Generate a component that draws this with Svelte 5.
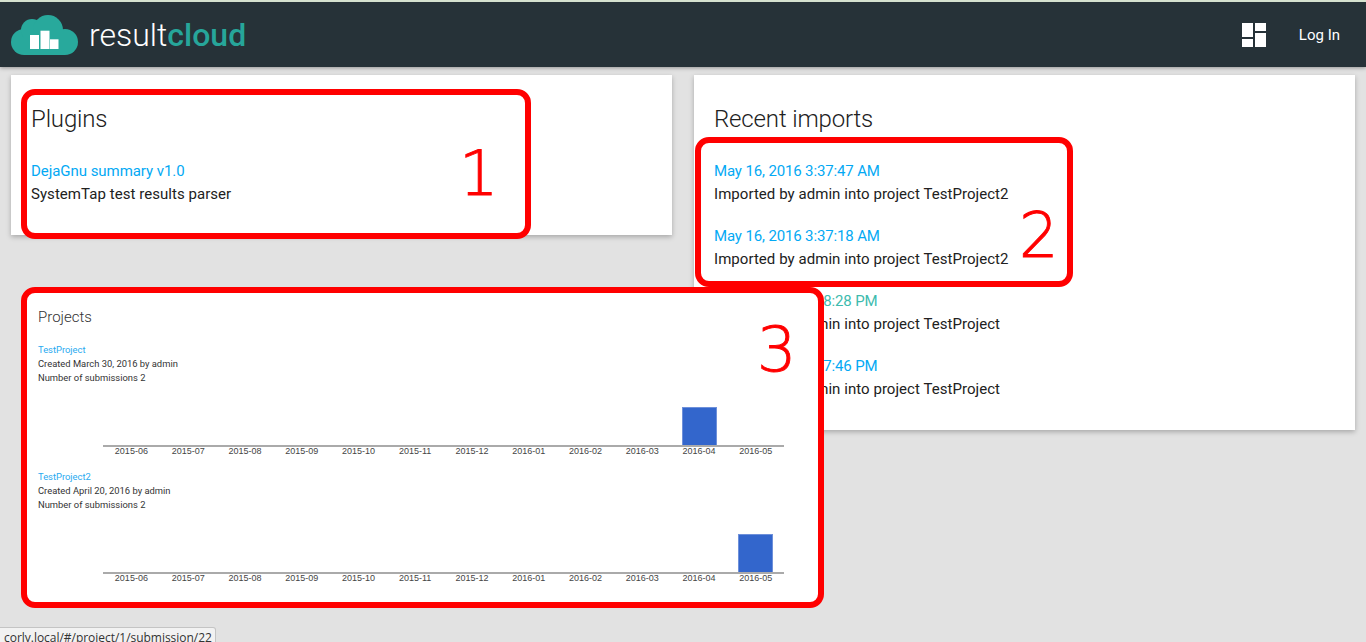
<script lang="ts">
  const imports = [
    { date: 'May 16, 2016 3:37:47 AM', text: 'Imported by admin into project TestProject2' },
    { date: 'May 16, 2016 3:37:18 AM', text: 'Imported by admin into project TestProject2' },
    { date: 'Mar 30, 2016 7:38:28 PM', text: 'Imported by admin into project TestProject', hover: true },
    { date: 'Mar 30, 2016 7:37:46 PM', text: 'Imported by admin into project TestProject' },
  ];

  const months = [
    '2015-06', '2015-07', '2015-08', '2015-09', '2015-10', '2015-11',
    '2015-12', '2016-01', '2016-02', '2016-03', '2016-04', '2016-05',
  ];

  const projects = [
    { name: 'TestProject', created: 'Created March 30, 2016 by admin', count: 2, barIndex: 10 },
    { name: 'TestProject2', created: 'Created April 20, 2016 by admin', count: 2, barIndex: 11 },
  ];
</script>

<div class="page">
  <header class="topbar">
    <div class="brand">
      <svg class="logo" viewBox="0 0 67 40" width="67" height="40" aria-hidden="true">
        <g fill="#28a99c">
          <circle cx="13" cy="27" r="13" />
          <circle cx="21" cy="15" r="11" />
          <circle cx="37" cy="15" r="15" />
          <circle cx="54" cy="27" r="13" />
          <rect x="13" y="15" width="41" height="25" />
        </g>
        <rect x="19" y="20" width="9" height="14" fill="#fff" />
        <rect x="29.500" y="15.700" width="9" height="18.300" fill="#fff" />
        <rect x="39" y="24.300" width="8.500" height="9.700" fill="#fff" />
      </svg>
      <span class="wordmark">result<b>cloud</b></span>
    </div>
    <div class="actions">
      <svg class="dash" viewBox="0 0 24 24" width="24" height="24" aria-hidden="true">
        <path d="M0 0h11v14H0zM13 0h11v8H13zM0 16h11v8H0zM13 10h11v14H13z" fill="#fff" />
      </svg>
      <span class="login">Log In</span>
    </div>
  </header>

  <main class="columns">
    <section class="card plugins">
      <h2>Plugins</h2>
      <a class="link plugin-link" href="#plugin">DejaGnu summary v1.0</a>
      <p>SystemTap test results parser</p>
    </section>
    <section class="card recent">
      <h2>Recent imports</h2>
      {#each imports as item}
        <div class="entry">
          <a class="link" class:hover={item.hover} href="#import">{item.date}</a>
          <p>{item.text}</p>
        </div>
      {/each}
    </section>
  </main>

  <!-- red annotation boxes drawn over the page -->
  <div class="callout box1"><span class="num">1</span></div>
  <div class="callout box2"><span class="num">2</span></div>
  <div class="callout box3">
    <h3>Projects</h3>
    {#each projects as project}
      <div class="project">
        <a class="small-link" href="#project">{project.name}</a>
        <div class="meta">{project.created}</div>
        <div class="meta">Number of submissions {project.count}</div>
        <div class="chart">
          <div class="plot">
            {#each months as _, i}
              <div class="slot">
                {#if i === project.barIndex}<div class="bar"></div>{/if}
              </div>
            {/each}
          </div>
          <div class="labels">
            {#each months as month}
              <span>{month}</span>
            {/each}
          </div>
        </div>
      </div>
    {/each}
    <span class="num">3</span>
  </div>

  <div class="status">corly.local/#/project/1/submission/22</div>
</div>

<style>
  :global(body) {
    margin: 0;
    background: #e2e2e2;
    font-family: Roboto, "Liberation Sans", sans-serif;
  }

  .page {
    position: relative;
    height: 642px;
    overflow: hidden;
    background: #e2e2e2;
  }

  .topbar {
    height: 65px;
    border-top: 2px solid #d5e2cf;
    background: #263238;
    display: flex;
    align-items: center;
    justify-content: space-between;
    box-shadow: 0 1px 4px rgba(0, 0, 0, 0.35);
  }

  .brand {
    display: flex;
    align-items: center;
    margin-left: 11px;
    gap: 11px;
  }

  .logo {
    display: block;
  }

  .wordmark {
    font-size: 32px;
    font-weight: 300;
    color: #fff;
    line-height: 40px;
  }

  .wordmark b {
    font-weight: 500;
    color: #26a69a;
  }

  .actions {
    display: flex;
    align-items: center;
    gap: 33px;
    margin-right: 26px;
  }

  .dash {
    display: block;
  }

  .login {
    font-size: 15px;
    color: #fff;
  }

  .columns {
    display: grid;
    grid-template-columns: 661px 661px;
    column-gap: 22px;
    align-items: start;
    padding: 8px 11px 0;
  }

  .card {
    background: #fff;
    box-shadow: 0 2px 5px rgba(0, 0, 0, 0.26);
    padding: 0 20px;
  }

  .plugins {
    height: 160px;
  }

  .recent {
    height: 355px;
  }

  h2 {
    margin: 0 0 26px;
    padding-top: 28px;
    font-size: 24px;
    line-height: 32px;
    font-weight: 300;
    letter-spacing: -0.15px;
    color: #212121;
  }

  .link {
    display: block;
    font-size: 15px;
    line-height: 20px;
    letter-spacing: -0.14px;
    color: #03a9f4;
    text-decoration: none;
  }

  .plugin-link {
    letter-spacing: -0.05px;
  }

  .link.hover {
    color: #3dbbae;
  }

  p {
    margin: 3px 0 0;
    font-size: 15px;
    line-height: 20px;
    letter-spacing: 0.05px;
    color: #212121;
  }

  .entry {
    height: 65px;
  }

  .callout {
    position: absolute;
    box-sizing: border-box;
    border: 6px solid #f00;
    border-radius: 14px;
  }

  .box1 {
    left: 21px;
    top: 89px;
    width: 510px;
    height: 150px;
  }

  .box2 {
    left: 695px;
    top: 137px;
    width: 378px;
    height: 150px;
  }

  .box3 {
    left: 21px;
    top: 287px;
    width: 803px;
    height: 321px;
    background: #fff;
    padding: 15px 11px 0;
  }

  .num {
    position: absolute;
    font-family: "DejaVu Sans", sans-serif;
    font-size: 62px;
    font-weight: 200;
    -webkit-text-stroke: 0.9px #f00;
    line-height: 65px;
    color: #f00;
  }

  .box1 .num {
    left: 432px;
    top: 46px;
  }

  .box2 .num {
    left: 318px;
    top: 60px;
  }

  .box3 .num {
    left: 730px;
    top: 24px;
  }

  h3 {
    margin: 0 0 17px;
    font-size: 15px;
    line-height: 18px;
    font-weight: 300;
    color: #333;
  }

  .project {
    height: 127px;
  }

  .small-link {
    display: block;
    font-size: 9.400px;
    line-height: 14px;
    color: #29aaf0;
    text-decoration: none;
  }

  .meta {
    font-size: 9.400px;
    line-height: 14px;
    color: #333;
  }

  .chart {
    margin-left: 65px;
    width: 681.200px;
    margin-top: 22px;
  }

  .plot {
    height: 38px;
    display: grid;
    grid-template-columns: repeat(12, 1fr);
    border-bottom: 2px solid #aaa;
  }

  .slot {
    display: flex;
    justify-content: center;
    align-items: flex-end;
  }

  .bar {
    width: 35px;
    height: 38px;
    box-sizing: border-box;
    background: #3366cc;
    border: 1px solid #6e90da;
    border-bottom: 0;
  }

  .labels {
    display: grid;
    grid-template-columns: repeat(12, 1fr);
    margin-top: -2px;
    font-family: "Liberation Sans", sans-serif;
    font-size: 9px;
    line-height: 13px;
    color: #444;
    text-align: center;
  }

  .status {
    position: absolute;
    left: 0;
    top: 627px;
    padding: 2px 3px 0 4px;
    box-sizing: border-box;
    height: 20px;
    font-family: "Open Sans", "Noto Sans", sans-serif;
    font-size: 12px;
    line-height: 16px;
    letter-spacing: -0.03px;
    color: #333;
    background: #f2f2f2;
    border: 1px solid #c4c4c4;
    border-left: 0;
    border-radius: 0 3px 0 0;
  }
</style>
